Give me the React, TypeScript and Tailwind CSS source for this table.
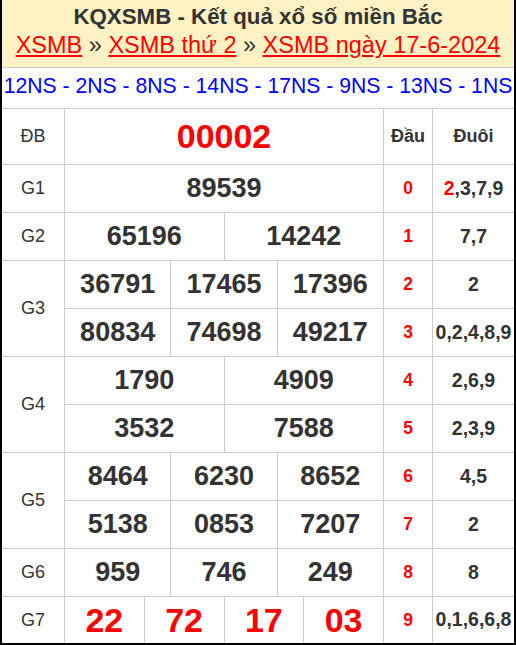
const FONT = "font-['Liberation_Sans',Arial,sans-serif]"

type Sub = { nums: string[]; dau: string; duoi: React.ReactNode }
type Group = { label: string; subs: Sub[]; red?: boolean; big?: boolean; h?: string; last?: boolean }

const GROUPS: Group[] = [
  { label: "ĐB", red: true, big: true, h: "h-[56px]", subs: [{ nums: ["00002"], dau: "Đầu", duoi: "Đuôi" }] },
  {
    label: "G1",
    subs: [
      {
        nums: ["89539"],
        dau: "0",
        duoi: (
          <>
            <span className="text-[#f00]">2</span>,3,7,9
          </>
        ),
      },
    ],
  },
  { label: "G2", subs: [{ nums: ["65196", "14242"], dau: "1", duoi: "7,7" }] },
  {
    label: "G3",
    subs: [
      { nums: ["36791", "17465", "17396"], dau: "2", duoi: "2" },
      { nums: ["80834", "74698", "49217"], dau: "3", duoi: "0,2,4,8,9" },
    ],
  },
  {
    label: "G4",
    subs: [
      { nums: ["1790", "4909"], dau: "4", duoi: "2,6,9" },
      { nums: ["3532", "7588"], dau: "5", duoi: "2,3,9" },
    ],
  },
  {
    label: "G5",
    subs: [
      { nums: ["8464", "6230", "8652"], dau: "6", duoi: "4,5" },
      { nums: ["5138", "0853", "7207"], dau: "7", duoi: "2" },
    ],
  },
  { label: "G6", subs: [{ nums: ["959", "746", "249"], dau: "8", duoi: "8" }] },
  { label: "G7", red: true, big: true, last: true, subs: [{ nums: ["22", "72", "17", "03"], dau: "9", duoi: "0,1,6,6,8" }] },
]

function GroupRows({ g }: { g: Group }) {
  const isHead = g.label === "ĐB"
  return (
    <div className="flex">
      <div
        className={`w-[63px] shrink-0 flex items-center justify-center border-r border-[#ccc] text-[18px] text-[#333] ${
          g.last ? "" : "border-b"
        }`}
      >
        {g.label}
      </div>
      <div className="flex flex-col flex-1">
        {g.subs.map((s, i) => (
          <div
            key={i}
            className={`flex ${g.h ?? (g.last ? "h-[46px]" : "h-[48px]")} ${g.last ? "" : "border-b border-[#ccc]"}`}
          >
            <div className="w-[319px] shrink-0 flex border-r border-[#ccc]">
              {s.nums.map((n, j) => (
                <div
                  key={j}
                  className={`flex-1 flex items-center justify-center font-bold ${
                    g.big ? "text-[34px]" : "text-[27px]"
                  } ${g.red ? "text-[#f00]" : "text-[#333]"} ${j > 0 ? "border-l border-[#ccc]" : ""}`}
                >
                  {n}
                </div>
              ))}
            </div>
            <div
              className={`w-[49px] shrink-0 flex items-center justify-center border-r border-[#ccc] font-bold ${
                isHead ? "text-[18px] text-[#333]" : "text-[17.5px] text-[#f00]"
              }`}
            >
              {s.dau}
            </div>
            <div
              className={`flex-1 flex items-center justify-center font-bold text-[#333] whitespace-nowrap ${
                isHead ? "text-[18px]" : "text-[19.5px]"
              }`}
            >
              {s.duoi}
            </div>
          </div>
        ))}
      </div>
    </div>
  )
}

export default function App() {
  return (
    <div className={`${FONT} w-[516px] h-[645px] overflow-hidden bg-white border-x-2 border-b-2 border-black`}>
      {/* Header */}
      <header className="h-[68px] bg-[#fef1c3] border-b border-[#ccc] pt-[3px] text-center">
        <h1 className="text-[22.3px] leading-[28px] font-bold text-[#333]">KQXSMB - Kết quả xổ số miền Bắc</h1>
        <p className="text-[23.5px] leading-[28px] text-[#333] whitespace-nowrap">
          <a className="text-[#f00] underline">XSMB</a> » <a className="text-[#f00] underline">XSMB thứ 2</a> »{" "}
          <a className="text-[#f00] underline">XSMB ngày 17-6-2024</a>
        </p>
      </header>

      {/* Loại vé */}
      <div className="h-[41px] border-b border-[#ccc] flex items-center justify-center pb-[4px] text-[21.2px] text-[#00f] whitespace-nowrap">
        12NS - 2NS - 8NS - 14NS - 17NS - 9NS - 13NS - 1NS
      </div>

      {GROUPS.map((g) => (
        <GroupRows key={g.label} g={g} />
      ))}
    </div>
  )
}
